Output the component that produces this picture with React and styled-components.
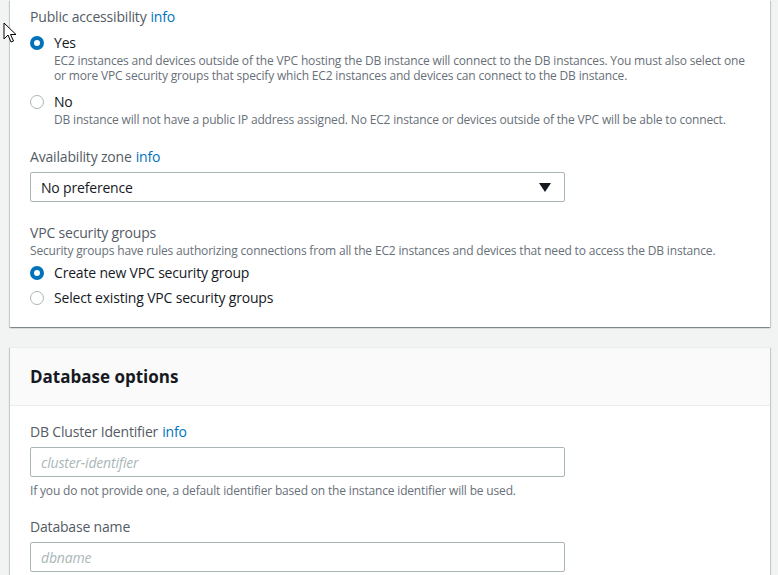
import React from "react";
import styled, { createGlobalStyle } from "styled-components";

const Global = createGlobalStyle`
  html, body { margin: 0; padding: 0; }
  body {
    background: #f2f3f3;
    font-family: "Open Sans", "Noto Sans", sans-serif;
    color: #16191f;
    overflow: hidden;
  }
`;

const Page = styled.div`
  position: relative;
  width: 778px;
  height: 575px;
  overflow: hidden;
  padding: 0 8px 0 10px;
  box-sizing: border-box;
`;

const Card = styled.section`
  background: #fff;
  box-shadow: 0 1px 1px 0 rgba(0, 28, 36, 0.3), 1px 1px 1px 0 rgba(0, 28, 36, 0.15),
    -1px 1px 1px 0 rgba(0, 28, 36, 0.15);
  border-top: ${(p) => (p.$bordered ? "1px solid #eaeded" : "none")};
  margin-bottom: ${(p) => p.$mb || 0}px;
`;

const CardBody = styled.div`
  padding: ${(p) => p.$pad};
  display: flex;
  flex-direction: column;
`;

const CardHeader = styled.header`
  background: #fafafa;
  border-bottom: 1px solid #eaeded;
  padding: 18px 20px 17px;
`;

const Title = styled.h2`
  margin: 0;
  font-size: 17px;
  line-height: 22px;
  font-weight: 700;
  color: #16191f;
`;

const Label = styled.div`
  font-size: 14px;
  line-height: 20px;
  letter-spacing: -0.18px;
  color: #545b64;
  margin-top: ${(p) => p.$mt || 0}px;
`;

const Info = styled.span`
  color: #0073bb;
  margin-left: 4px;
`;

const Desc = styled.div`
  font-size: 12px;
  line-height: 15px;
  letter-spacing: -0.17px;
  color: #687078;
  white-space: nowrap;
  margin-top: ${(p) => p.$mt || 0}px;
  padding-left: ${(p) => p.$indent || 0}px;
`;

const RadioRow = styled.label`
  display: flex;
  align-items: center;
  gap: 10px;
  font-size: 14px;
  line-height: 20px;
  letter-spacing: -0.18px;
  color: #16191f;
  margin-top: ${(p) => p.$mt || 0}px;
`;

const RadioDot = styled.span`
  width: 14px;
  height: 14px;
  box-sizing: border-box;
  border-radius: 50%;
  flex: none;
  background: #fff;
  border: ${(p) => (p.$checked ? "4px solid #0073bb" : "1px solid #aab7b8")};
`;

const Select = styled.div`
  margin-top: ${(p) => p.$mt || 0}px;
  width: 535px;
  height: 30px;
  box-sizing: border-box;
  border: 1px solid #aab7b8;
  border-radius: 2px;
  display: flex;
  align-items: center;
  justify-content: space-between;
  padding: 0 13px 0 10px;
  font-size: 14px;
  letter-spacing: -0.18px;
  color: #16191f;
`;

const Caret = styled.span`
  width: 0;
  height: 0;
  border-left: 6px solid transparent;
  border-right: 6px solid transparent;
  border-top: 9px solid #16191f;
`;

const Input = styled.div`
  margin-top: ${(p) => p.$mt || 0}px;
  width: 535px;
  height: 30px;
  box-sizing: border-box;
  border: 1px solid #aab7b8;
  border-radius: 2px;
  display: flex;
  align-items: center;
  padding: 0 10px;
  font-size: 14px;
  letter-spacing: -0.18px;
  font-style: italic;
  color: #aab7b8;
`;

const Cursor = styled.svg`
  position: absolute;
  left: 3px;
  top: 22px;
`;

export default function App() {
  return (
    <>
      <Global />
      <Page>
        <Card $mb={20}>
          <CardBody $pad="7px 20px 19px">
            <Label>
              Public accessibility<Info>info</Info>
            </Label>
            <RadioRow $mt={6}>
              <RadioDot $checked />
              Yes
            </RadioRow>
            <Desc $indent={24}>
              EC2 instances and devices outside of the VPC hosting the DB instance will connect to the DB instances. You must also select one
              <br />
              or more VPC security groups that specify which EC2 instances and devices can connect to the DB instance.
            </Desc>
            <RadioRow $mt={9}>
              <RadioDot />
              No
            </RadioRow>
            <Desc $indent={24}>
              DB instance will not have a public IP address assigned. No EC2 instance or devices outside of the VPC will be able to connect.
            </Desc>
            <Label $mt={20}>
              Availability zone<Info>info</Info>
            </Label>
            <Select $mt={5}>
              No preference
              <Caret />
            </Select>
            <Label $mt={21}>VPC security groups</Label>
            <Desc>
              Security groups have rules authorizing connections from all the EC2 instances and devices that need to access the DB instance.
            </Desc>
            <RadioRow $mt={5}>
              <RadioDot $checked />
              Create new VPC security group
            </RadioRow>
            <RadioRow $mt={5}>
              <RadioDot />
              Select existing VPC security groups
            </RadioRow>
          </CardBody>
        </Card>
        <Card $bordered>
          <CardHeader>
            <Title>Database options</Title>
          </CardHeader>
          <CardBody $pad="16px 20px 20px">
            <Label>
              DB Cluster Identifier<Info>info</Info>
            </Label>
            <Input $mt={5}>cluster-identifier</Input>
            <Desc $mt={6}>
              If you do not provide one, a default identifier based on the instance identifier will be used.
            </Desc>
            <Label $mt={19}>Database name</Label>
            <Input $mt={5}>dbname</Input>
          </CardBody>
        </Card>
        <Cursor width="14" height="22" viewBox="0 0 14 22">
          <path
            d="M1 1 L1 17 L5 13 L8 20 L10.5 19 L7.5 12.5 L13 12.5 Z"
            fill="#fff"
            stroke="#000"
            strokeWidth="1"
            strokeLinejoin="round"
          />
        </Cursor>
      </Page>
    </>
  );
}
